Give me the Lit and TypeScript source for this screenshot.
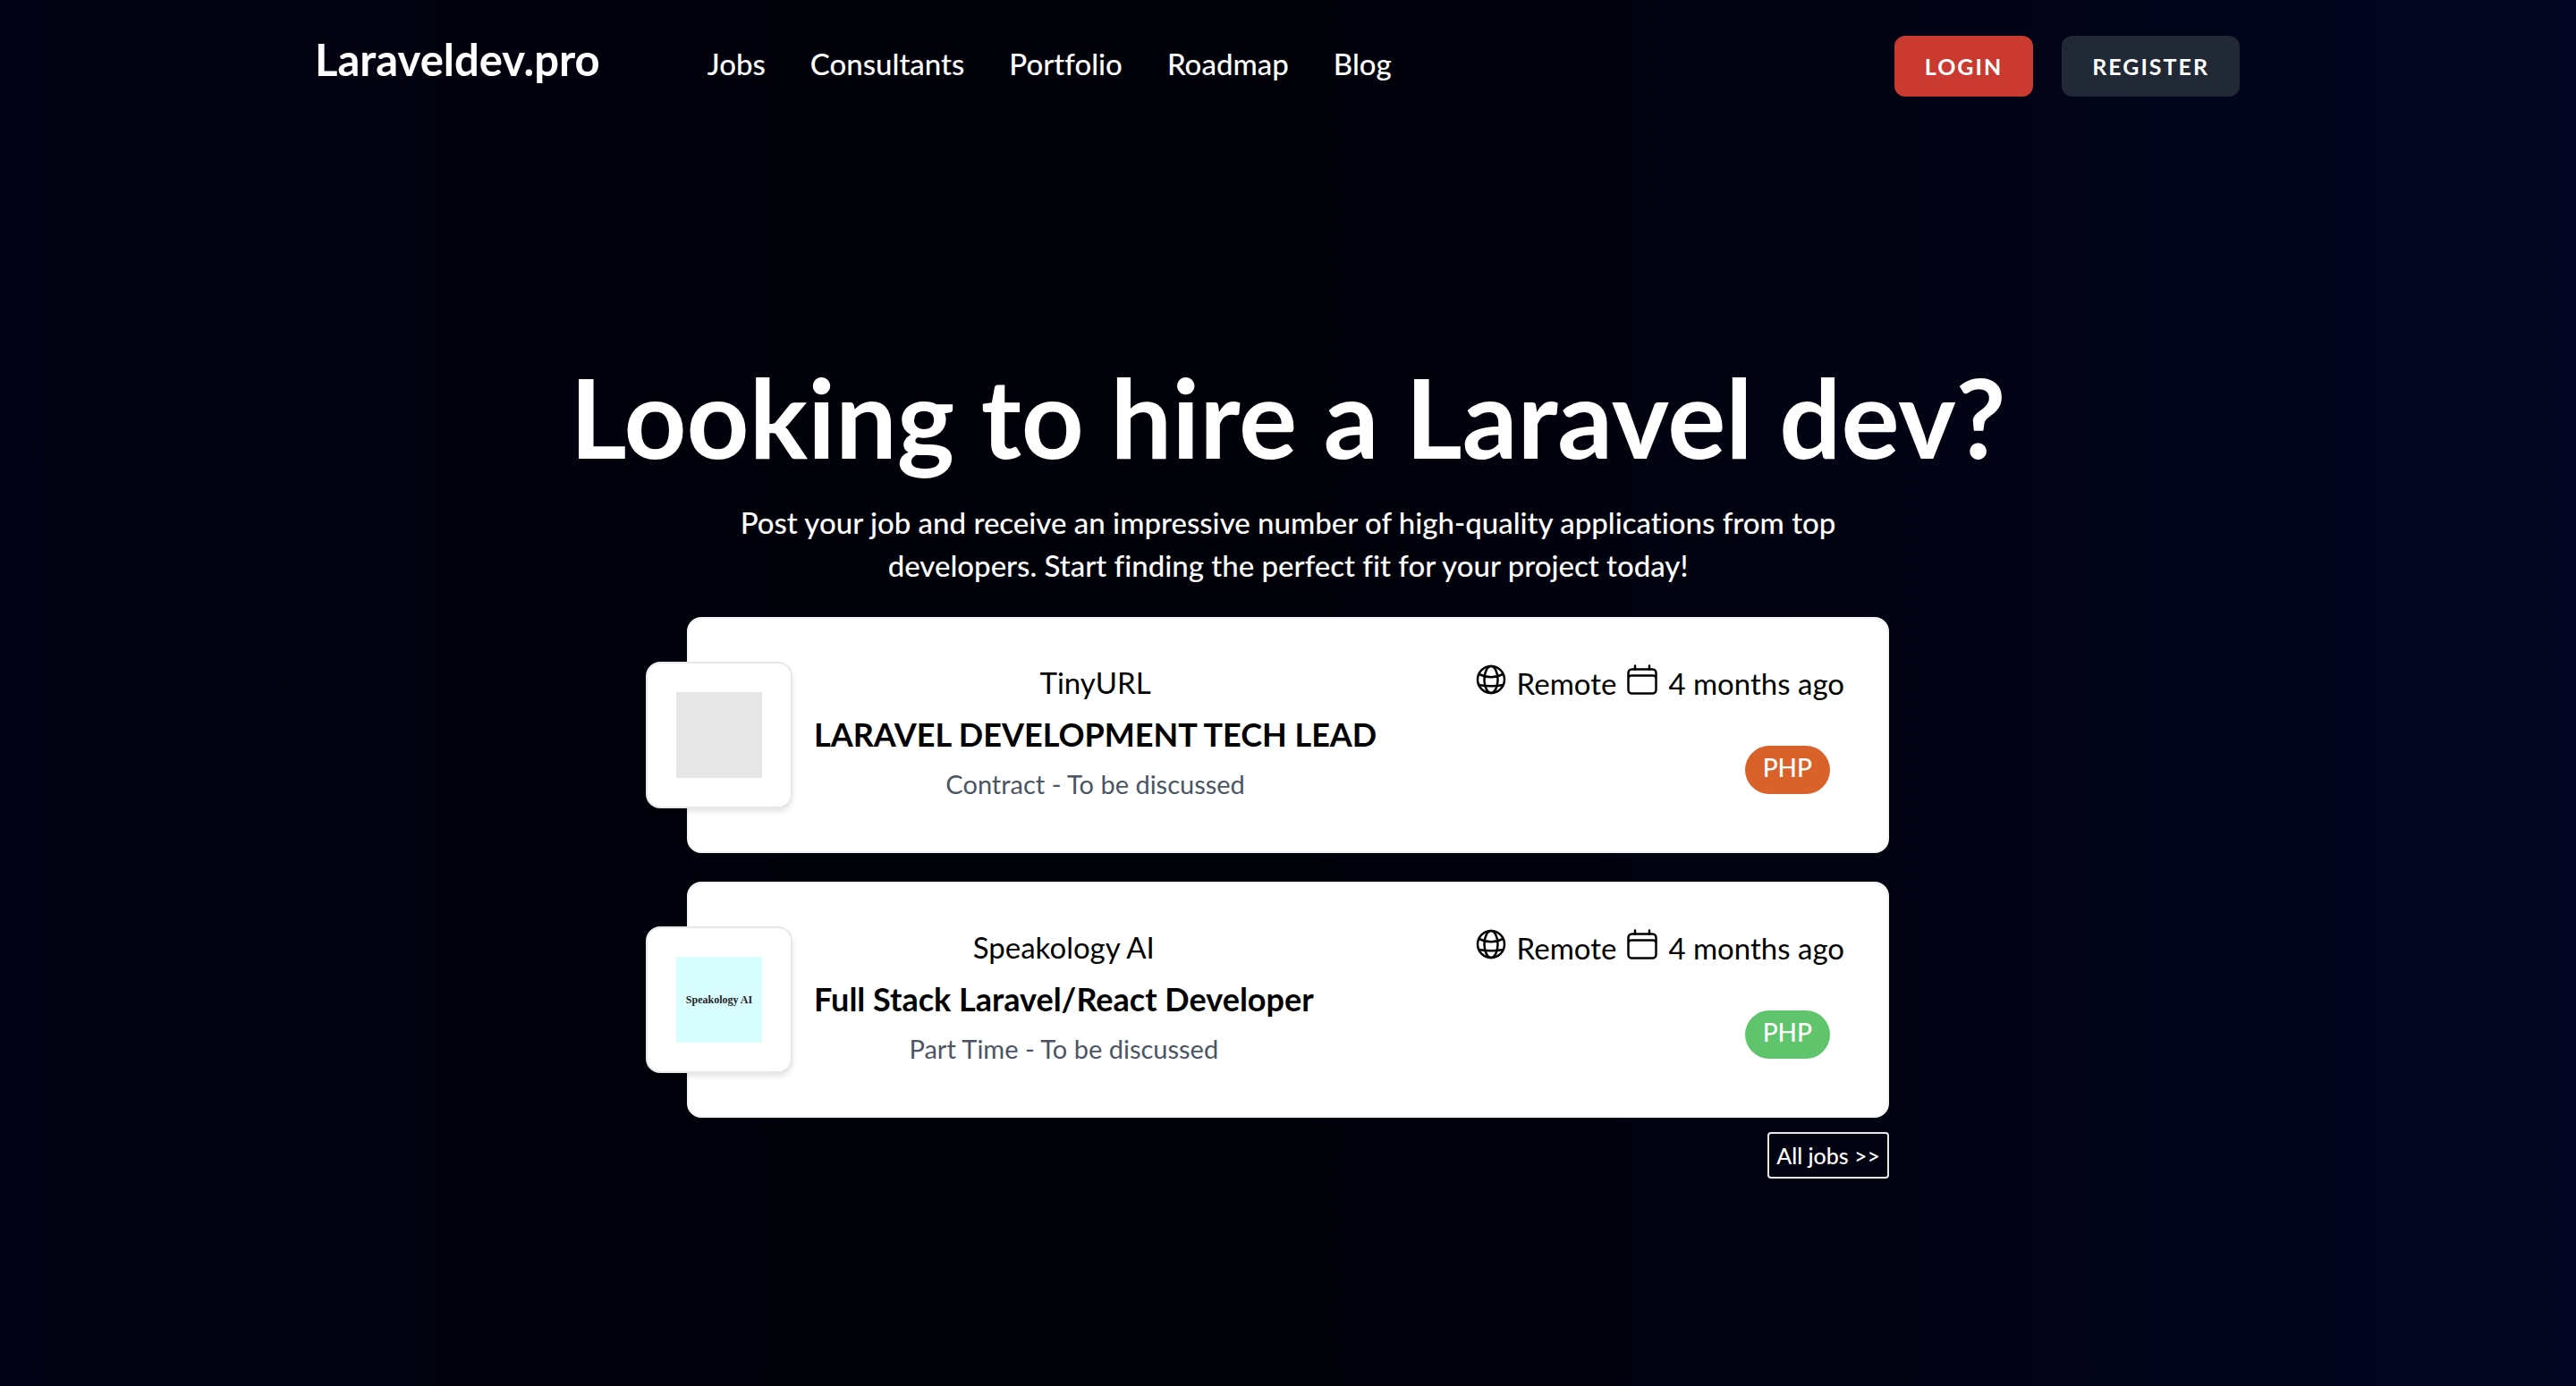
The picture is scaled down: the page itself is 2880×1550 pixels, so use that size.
import { LitElement, html, css } from "lit";
import { customElement } from "lit/decorators.js";
import { styleMap } from "lit/directives/style-map.js";

interface Job {
  company: string;
  title: string;
  terms: string;
  location: string;
  posted: string;
  tag: string;
  tagColor: string;
  logoColor: string;
  logoText: string;
}

const LINKS = ["Jobs", "Consultants", "Portfolio", "Roadmap", "Blog"];

const JOBS: Job[] = [
  {
    company: "TinyURL",
    title: "LARAVEL DEVELOPMENT TECH LEAD",
    terms: "Contract - To be discussed",
    location: "Remote",
    posted: "4 months ago",
    tag: "PHP",
    tagColor: "#d9622b",
    logoColor: "#e7e7e7",
    logoText: "",
  },
  {
    company: "Speakology AI",
    title: "Full Stack Laravel/React Developer",
    terms: "Part Time - To be discussed",
    location: "Remote",
    posted: "4 months ago",
    tag: "PHP",
    tagColor: "#5fc46b",
    logoColor: "#d9feff",
    logoText: "Speakology AI",
  },
];

const globeIcon = html`
  <svg class="icon" viewBox="0 0 36 36" aria-hidden="true">
    <circle cx="18" cy="18" r="15" />
    <ellipse cx="18" cy="18" rx="7.5" ry="15" />
    <path d="M4.5 12Q18 18.500 31.500 12M4.500 24Q18 26.500 31.500 24" />
  </svg>
`;

const calendarIcon = html`
  <svg class="icon" viewBox="0 0 36 36" aria-hidden="true">
    <rect x="2.500" y="6.500" width="31" height="27" rx="4" />
    <path d="M3 15Q3.500 13.500 6 13.500H30Q32.500 13.500 33 15M10 2.500V6.500M26 2.500V6.500" />
  </svg>
`;

@customElement("app-root")
export class AppRoot extends LitElement {
  static styles = css`
    :host {
      display: block;
      box-sizing: border-box;
      min-height: 100vh;
      padding: 0 352px;
      color: #fff;
      font-family: Lato, "Liberation Sans", sans-serif;
      font-size: 33px;
      line-height: 48px;
      font-variant-ligatures: none;
      background: linear-gradient(90deg, #020415 0%, #020210 15%, #01010a 32%, #01010a 50%, #020314 75%, #020622 100%);
    }
    * {
      box-sizing: border-box;
    }
    a {
      color: inherit;
      text-decoration: none;
    }
    h1,
    h2,
    p {
      margin: 0;
    }
    .bar {
      display: flex;
      align-items: center;
      height: 148px;
    }
    .brand {
      margin-right: 120px;
      padding-bottom: 16px;
      font-size: 49px;
      font-weight: 700;
    }
    .links {
      display: flex;
      flex: 1;
      gap: 50px;
      padding-bottom: 6px;
      font-weight: 500;
    }
    .auth {
      display: flex;
      gap: 32px;
      margin-right: 24px;
    }
    .button {
      padding: 10px 34px;
      border-radius: 12px;
      font-size: 25px;
      font-weight: 700;
      letter-spacing: 2px;
    }
    .login {
      background: #cb3a31;
    }
    .register {
      background: #222936;
    }
    .hero {
      display: flex;
      flex-direction: column;
      align-items: center;
      padding-top: 254px;
      text-align: center;
    }
    .headline {
      font-size: 122px;
      font-weight: 700;
      line-height: 128px;
    }
    .lead {
      max-width: 1280px;
      padding: 30px 0 34px;
      font-weight: 500;
    }
    .list {
      display: flex;
      flex-direction: column;
      width: 100%;
      max-width: 1344px;
    }
    .jobs {
      display: flex;
      flex-direction: column;
      gap: 32px;
      margin: 0;
      padding: 0;
      list-style: none;
    }
    .job {
      display: flex;
      align-items: center;
      height: 264px;
      padding-right: 48px;
      border: 2px solid #f3f4f6;
      border-radius: 16px;
      background: #fff;
      color: #000;
    }
    .logo {
      flex: none;
      width: 164px;
      margin-left: -48px;
      padding: 32px;
      border: 2px solid #e5e7eb;
      border-radius: 16px;
      background: #fff;
      box-shadow: 0 4px 6px rgba(0, 0, 0, 0.1);
    }
    .picture {
      display: grid;
      place-items: center;
      height: 96px;
      color: #222;
      font-family: "Liberation Serif", serif;
      font-size: 12px;
      font-weight: 700;
      white-space: nowrap;
    }
    .summary {
      flex: 1;
      display: flex;
      flex-direction: column;
      align-items: flex-start;
      padding-left: 24px;
    }
    .details {
      padding-bottom: 4px;
      text-align: center;
    }
    .title {
      padding: 8px 0 6px;
      font-size: 36px;
      font-weight: 700;
      line-height: 52px;
    }
    .terms {
      color: #4b5563;
      font-size: 29px;
    }
    .facts {
      display: flex;
      flex-direction: column;
      align-items: flex-end;
      gap: 46px;
      padding-bottom: 16px;
    }
    .meta {
      display: flex;
      gap: 11px;
    }
    .icon {
      width: 36px;
      height: 36px;
      margin-top: 2px;
      fill: none;
      stroke: #000;
      stroke-width: 2.5;
      stroke-linecap: round;
    }
    .tag {
      height: 54px;
      margin-right: 16px;
      padding: 0 20px;
      border-radius: 27px;
      color: #fff;
      font-size: 28px;
      font-weight: 500;
    }
    .all {
      align-self: flex-end;
      margin-top: 16px;
      padding: 0 8px;
      border: 2px solid #e5e7eb;
      border-radius: 4px;
      font-size: 25px;
      font-weight: 500;
    }
  `;

  private renderJob(job: Job) {
    return html`
      <li class="job">
        <div class="logo">
          <div class="picture" style=${styleMap({ background: job.logoColor })}>${job.logoText}</div>
        </div>
        <div class="summary">
          <div class="details">
            <p>${job.company}</p>
            <h2 class="title">${job.title}</h2>
            <p class="terms">${job.terms}</p>
          </div>
        </div>
        <div class="facts">
          <div class="meta">
            ${globeIcon}<span>${job.location}</span>${calendarIcon}<span>${job.posted}</span>
          </div>
          <span class="tag" style=${styleMap({ background: job.tagColor })}>${job.tag}</span>
        </div>
      </li>
    `;
  }

  render() {
    return html`
      <header class="bar">
        <a class="brand" href="#">Laraveldev.pro</a>
        <nav class="links">${LINKS.map((name) => html`<a href="#">${name}</a>`)}</nav>
        <div class="auth">
          <a class="button login" href="#">LOGIN</a>
          <a class="button register" href="#">REGISTER</a>
        </div>
      </header>
      <main class="hero">
        <h1 class="headline">Looking to hire a Laravel dev?</h1>
        <p class="lead">
          Post your job and receive an impressive number of high-quality applications from top
          developers. Start finding the perfect fit for your project today!
        </p>
        <div class="list">
          <ul class="jobs">
            ${JOBS.map((job) => this.renderJob(job))}
          </ul>
          <a class="all" href="#">All jobs &gt;&gt;</a>
        </div>
      </main>
    `;
  }
}
